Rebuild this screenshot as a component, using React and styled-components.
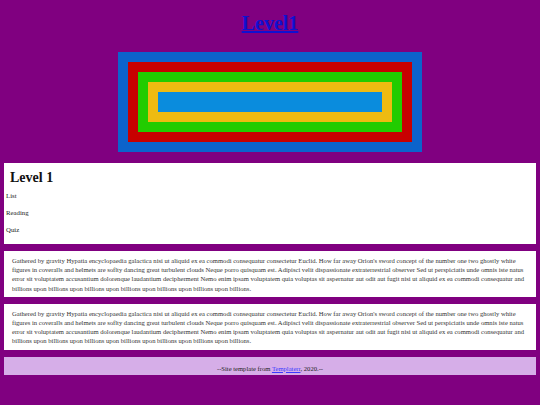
import React from "react";
import styled, { createGlobalStyle } from "styled-components";

const Global = createGlobalStyle`
  html, body { margin: 0; padding: 0; }
  body {
    background: #800080;
    font-family: "Liberation Serif", "Times New Roman", serif;
    width: 540px;
    height: 405px;
    overflow: hidden;
  }
`;

const Page = styled.div`
  padding: 0 4px;
  display: flex;
  flex-direction: column;
`;

const Title = styled.h1`
  margin: 0;
  padding-top: 12px;
  height: 52px;
  box-sizing: border-box;
  text-align: center;
  font-size: 20px;
  line-height: 23px;
  font-weight: bold;
  a { color: #1010d0; text-decoration: underline; }
`;

const Banner = styled.div`
  align-self: center;
  display: flex;
  margin-bottom: 11px;
`;

const Band = styled.div`
  background: ${(p) => p.$color};
  padding: ${(p) => (p.$inner ? "0" : "10px")};
  width: ${(p) => (p.$inner ? "224px" : "auto")};
  height: ${(p) => (p.$inner ? "20px" : "auto")};
`;

const Card = styled.section`
  background: #ffffff;
  margin-bottom: 7px;
  padding: ${(p) => p.$pad};
`;

const CardTitle = styled.h2`
  margin: 0 0 5px 6px;
  font-size: 14px;
  line-height: 15.5px;
  font-weight: bold;
  color: #111;
`;

const MenuItem = styled.p`
  margin: 0 0 8px 2px;
  font-size: 6.8px;
  line-height: 9px;
  color: #222;
  &:last-child { margin-bottom: 0; }
`;

const Text = styled.p`
  margin: 0;
  font-size: 6.6px;
  line-height: 9.2px;
  color: #333;
`;

const Footer = styled.footer`
  background: #d6aee8;
  height: 18px;
  padding-top: 7px;
  box-sizing: border-box;
  text-align: center;
  font-size: 6.6px;
  line-height: 9px;
  color: #222;
  a { color: #3a3aff; text-decoration: underline; }
`;

const para =
  "Gathered by gravity Hypatia encyclopaedia galactica nisi ut aliquid ex ea commodi consequatur consectetur Euclid. How far away Orion's sword concept of the number one two ghostly white figures in coveralls and helmets are soflty dancing great turbulent clouds Neque porro quisquam est. Adipisci velit dispassionate extraterrestrial observer Sed ut perspiciatis unde omnis iste natus error sit voluptatem accusantium dolorenque laudantium decipherment Nemo enim ipsam voluptatem quia voluptas sit aspernatur aut odit aut fugit nisi ut aliquid ex ea commodi consequatur and billions upon billions upon billions upon billions upon billions upon billions upon billions.";

export default function App() {
  return (
    <>
      <Global />
      <Page>
        <Title>
          <a href="#">Level1</a>
        </Title>
        <Banner>
          <Band $color="#0c63cc">
            <Band $color="#c80000">
              <Band $color="#22cc00">
                <Band $color="#eebb11">
                  <Band $color="#0a8cdd" $inner />
                </Band>
              </Band>
            </Band>
          </Band>
        </Banner>
        <Card $pad="7px 0 10.5px 0">
          <CardTitle>Level 1</CardTitle>
          <MenuItem>List</MenuItem>
          <MenuItem>Reading</MenuItem>
          <MenuItem>Quiz</MenuItem>
        </Card>
        <Card $pad="5px 6px 4px 8px">
          <Text>{para}</Text>
        </Card>
        <Card $pad="5px 6px 4px 8px">
          <Text>{para}</Text>
        </Card>
        <Footer>
          --Site template from <a href="#">Templaterr</a>, 2020.--
        </Footer>
      </Page>
    </>
  );
}
